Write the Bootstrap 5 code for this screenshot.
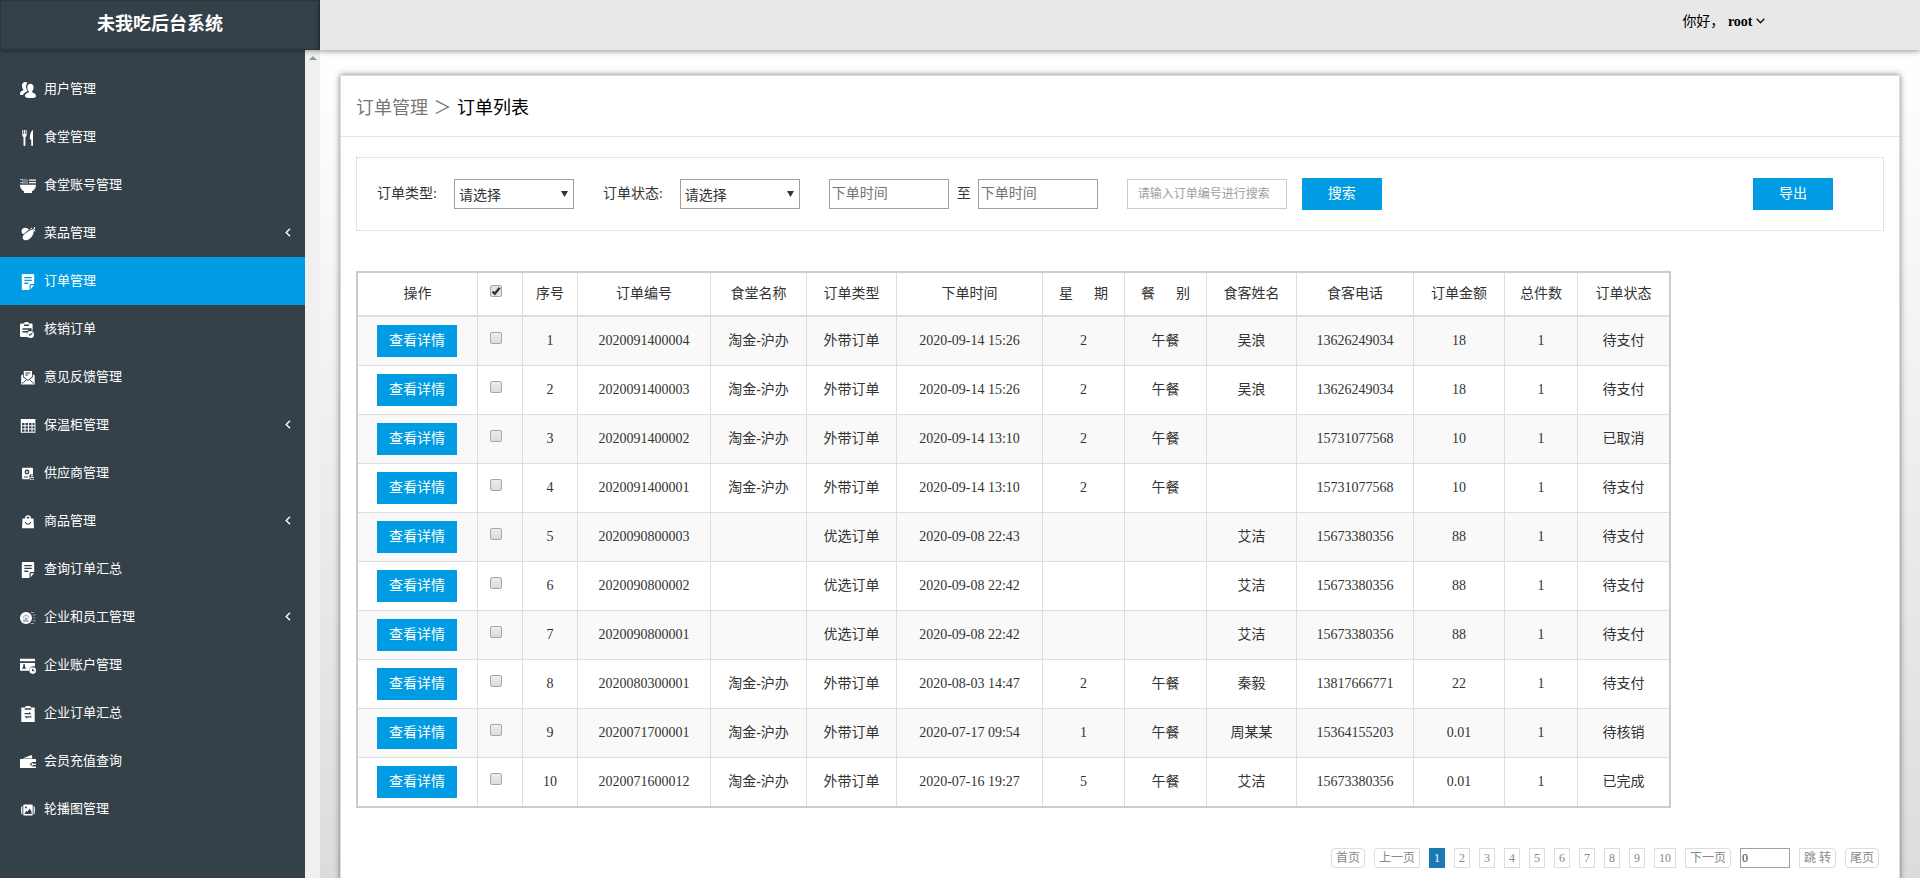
<!DOCTYPE html>
<html lang="zh-CN">
<head>
<meta charset="utf-8">
<meta name="viewport" content="width=device-width, initial-scale=1">
<title>未我吃后台系统</title>
<link href="https://cdn.jsdelivr.net/npm/bootstrap@5.3.0/dist/css/bootstrap.min.css" rel="stylesheet">
<style>
  :root { --brand: #009ce3; --dark: #354149; --rule: #ddd; }
  body { font: 14px/20px "Liberation Serif", "Noto Sans CJK SC", serif; color: #333; }
  button, input, select { font: inherit; }

  /* top bar */
  .topbar { height: 50px; z-index: 2; }
  .brand-box { width: 320px; background: var(--dark); color: #fff; font-size: 18px; line-height: 48px; font-weight: 700;
    box-shadow: inset 0 0 2px #111c24, 0 1px 5px rgba(0,0,0,.4); }
  .userbar { background: #e8e8e8; padding: 12px 155px 0 0; box-shadow: 0 1px 6px rgba(0,0,0,.45); }
  .userbar a { color: #000; }
  .userbar svg { vertical-align: 2px; }

  /* side menu */
  .sidebar { width: 305px; background: var(--dark); padding-top: 15px; }
  .sidebar .nav-link { height: 48px; padding: 0 14px 0 20px; color: #fff; font-size: 13px; line-height: 46px; gap: 8px; }
  .sidebar .nav-link.active { background: var(--brand); }
  .sidebar .ico { width: 16px; height: 16px; fill: #fff; flex: none; margin-top: 2px; }
  .sidebar .caret { width: 6px; height: 9px; fill: none; stroke: #fff; stroke-width: 1.4; margin: 0 0 2px auto; }
  .menu-scroll { width: 15px; background: #f0f0f0; padding-top: 6px; }
  .menu-scroll::before { content: ""; display: block; margin: 0 auto; width: 0; border: 4px solid transparent; border-top: 0; border-bottom-color: #999; }

  /* content */
  .workspace { background: linear-gradient(#fff, #dcdcdc); padding: 25px 20px 0; }
  .panel { background: #fff; border: 1px solid #ddd; box-shadow: 0 0 6px rgba(0,0,0,.5); min-height: 100vh; }
  .crumbs { font-size: 18px; line-height: 56px; padding: 4px 0 0 15px; border-bottom: 1px solid #e5e5e5; white-space: pre; color: #000; }
  .crumbs a, .crumbs span { color: #777; }
  .crumbs span { margin: 0 1px; }
  .panel-main { padding: 20px 15px 40px; }
  .filters { border: 1px dotted #ccc; padding: 20px 50px 20px 20px; line-height: 28px; }
  .filters label { line-height: 28px; }
  .field-gap { margin-left: 29px; }
  .between { margin: 0 7px 0 8px; }
  .search-btn { margin-left: 15px; }
  .box-field { width: 120px; height: 30px; border: 1px solid #a0a0a0; border-radius: 0; padding: 0 2px; background: #fff; color: #333; }
  .box-field::placeholder { color: #757575; }
  select.box-field { appearance: none; padding: 3px 4px 0; line-height: 24px; margin-left: 17px;
    background: #fff url("data:image/svg+xml,%3Csvg xmlns='http://www.w3.org/2000/svg' width='7' height='6'%3E%3Cpath d='M0 0h7L3.5 6z' fill='%23333'/%3E%3C/svg%3E") no-repeat right 5px top 11px; }
  .order-no { width: 160px; border-color: #ccc; font-size: 12px; padding: 0 10px; }
  .order-no::placeholder { color: #a0a0a0; }
  .act { width: 80px; height: 32px; border: 0; padding: 0; background: var(--brand); color: #fff; line-height: 30px; }

  .orders { table-layout: fixed; width: 1315px; margin: 40px 0; border: 2px solid #ccc; border-collapse: separate; border-spacing: 0; text-align: center; }
  .orders th, .orders td { font-weight: 400; padding: 0; border: solid var(--rule); border-width: 0 1px 1px 0; line-height: 20px; white-space: nowrap; }
  .orders tr > :last-child { border-right: 0; }
  .orders th { height: 44px; border-bottom-width: 2px; }
  .orders td { height: 49px; }
  .orders tbody tr:last-child td { border-bottom: 0; height: 48px; }
  .orders tbody tr:nth-child(odd) { background: #f9f9f9; }
  .orders td:first-child { text-align: left; padding-left: 19px; }
  .orders tr > :nth-child(2) { text-align: left; padding: 0 0 6px 12px; }
  .pick { appearance: none; display: block; width: 12px; height: 12px; margin: 0; border: 1px solid #a8a8a8; border-radius: 2px; background: linear-gradient(#ececec, #dcdcdc); }
  .pick:checked { background: url("data:image/svg+xml,%3Csvg xmlns='http://www.w3.org/2000/svg' viewBox='0 0 10 10'%3E%3Cpath d='M1.5 5.5l2.3 2.3L8.7 1.8' fill='none' stroke='%23333' stroke-width='2.4'/%3E%3C/svg%3E") center/10px, #e4e4e4; }

  /* pager */
  .pager { gap: 9px; padding-right: 5px; font-size: 12px; }
  .pager a, .pager button { display: block; height: 20px; padding: 0 4px; border: 1px solid var(--rule); background: #fff; color: #888; line-height: 18px; text-decoration: none; }
  .pager .on { background: #1b7ab5; border-color: #1b7ab5; color: #fff; }
  .pager .r-all { border-radius: 4px; }
  .pager .r-start { border-radius: 4px 0 0 4px; }
  .pager .r-end { border-radius: 0 4px 4px 0; }
  .pager input { width: 50px; height: 20px; border: 1px solid #a0a0a0; padding: 0 1px; color: #333; }
</style>
</head>
<body class="vh-100 overflow-hidden d-flex flex-column">

<header class="topbar d-flex flex-shrink-0 position-relative">
  <div class="brand-box text-center flex-shrink-0">未我吃后台系统</div>
  <div class="userbar flex-grow-1 d-flex justify-content-end align-items-start">
    <a href="#" class="text-decoration-none">你好， <b>root</b> <svg width="9" height="6" viewBox="0 0 9 6" fill="none" stroke="#111" stroke-width="1.3"><path d="M.7.8l3.8 3.9L8.3.8"/></svg></a>
  </div>
</header>

<div class="d-flex flex-grow-1 overflow-hidden">
  <nav class="sidebar flex-shrink-0" aria-label="主菜单">
    <div class="nav flex-column flex-nowrap">
      <a href="#" class="nav-link d-flex align-items-center"><svg class="ico" viewBox="0 0 16 16"><path d="M2 3.6C2 1.300 3.400 0 5.200 0c1 0 1.800.4 2.300 1C6.300 2 5.900 3.400 6 5c.1 1.500.6 2.700 1.400 3.600-.2 1-1.200 1.500-2.600 2.100-1 .5-1.500 1.300-1.700 2.300H.9C0 13 0 12.600 0 12c0-2 1-2.700 2.300-3.200 1-.4 1.200-.9.8-1.600C2.300 6.200 2 5 2 3.600z"/><path d="M7.200 5.300C7.200 3 8.700 1.800 10.400 1.800s3.200 1.200 3.200 3.500c0 1.600-.5 2.900-1.300 3.800-.5.7-.2 1.200.7 1.600 1.700.7 3 1.300 3 3.300 0 1.600-1.500 2-5.500 2s-5.500-.4-5.500-2c0-2 1.300-2.600 3-3.300.9-.4 1.200-.9.6-1.600-.9-1-1.400-2.200-1.400-3.800z"/></svg>用户管理</a>
      <a href="#" class="nav-link d-flex align-items-center"><svg class="ico" viewBox="0 0 16 16"><path d="M2.300 0h.9v4h.7V0h1v4h.7V0h1v5c0 1-.5 1.700-1.200 2v8.200c0 1-1.900 1-1.900 0V7c-.8-.3-1.200-1-1.200-2zM13 0v15.200c0 1-1.800 1-1.800 0V9.500H9.900C9.600 4.500 10.800 1 13 0z"/></svg>食堂管理</a>
      <a href="#" class="nav-link d-flex align-items-center"><svg class="ico" viewBox="0 0 16 16"><path d="M0 6.700h16c0 3-1.600 5.400-4 6.600V15H4v-1.700C1.600 12.100 0 9.700 0 6.700z"/><path d="M9 1.500h7v1.200H9zM9 4h7v1.200H9z"/><path d="M0 1.500h3M0 4.600h3M3 6V1.200M5 6V.7M7 6V1.200" stroke="#fff" stroke-opacity=".65"/></svg>食堂账号管理</a>
      <a href="#" class="nav-link d-flex align-items-center"><svg class="ico" viewBox="0 0 16 16"><path d="M1.800 6.800C1 4.500 2.200 2.400 4.200 1.800c1.800-.3 3.500.6 4.800 1.700L3.300 8.200C2.600 7.900 2 7.500 1.800 6.800z"/><path d="M2.800 10.200C4 7.700 7.500 6 10 4.300c1.700-1 3.600 0 3.500 2.200-.2 3-3.200 7-7 7.800-2.700.4-4.500-1.800-3.700-4.100z"/><path d="M12 4.800l2.600-2.600M10.500 3.500l1.200-1.300M13 5.300c1 0 1.500-.5 2-1.300M14.500 1v1.500" fill="none" stroke="#fff" stroke-width="1.100"/></svg>菜品管理<svg class="caret" viewBox="0 0 6 9"><path d="M5 .7L1.200 4.500 5 8.300"/></svg></a>
      <a href="#" class="nav-link d-flex align-items-center active" aria-current="page"><svg class="ico" viewBox="0 0 16 16"><path fill-rule="evenodd" d="M3 0h10c.8 0 1.200.4 1.200 1.200V10H11c-1 0-1.500.5-1.500 1.500V16H3c-.8 0-1.200-.4-1.200-1.200V1.200C1.800.4 2.200 0 3 0zm1.300 3v1.300h7.500V3zm0 2.800v1.300h7.500V5.800zm0 2.800v1.300h4V8.600zM10.700 11.200H14l-3.300 4z"/></svg>订单管理</a>
      <a href="#" class="nav-link d-flex align-items-center"><svg class="ico" viewBox="0 0 16 16"><path fill-rule="evenodd" d="M1.800 1.500H4C4 .5 5 0 6.500 0S9 .5 9 1.500h2.300c.8 0 1.300.5 1.300 1.300v5.700l-1 .1V6.300H2.500v1.400h6.300L7.500 9h-5v1.400h4.300c-.3 1.700.2 3.200 1.500 4.600H1.800C.8 15 0 14.500 0 13.500V2.800c0-.8.8-1.300 1.800-1.300zM4 2.500V4h5V2.500z"/><path fill-rule="evenodd" d="M10.500 9a3.500 3.500 0 110 7 3.500 3.500 0 010-7zm-2 3.400L10 14l2.800-2.800-.7-.8L10 12.500l-.8-.8z"/></svg>核销订单</a>
      <a href="#" class="nav-link d-flex align-items-center"><svg class="ico" viewBox="0 0 16 16"><path d="M1.200 5.500L3 4.300v2.900L7.800 11l5-3.800V4.300l1.900 1.200v9H1.200z"/><path fill-rule="evenodd" d="M3.800 1h8.200v5.800L7.800 9.900 3.800 6.700zm1.400 1.600v1h5v-1zm0 2v1h3v-1z"/><path d="M2 13.600l4.200-3.500M13.900 13.600L9.500 9.800" stroke="#354149" stroke-width=".9"/></svg>意见反馈管理</a>
      <a href="#" class="nav-link d-flex align-items-center"><svg class="ico" viewBox="0 0 16 16"><path fill-rule="evenodd" d="M.8 1h14.600v13.800H.8zM2 5v2.300h2.500V5zm3.500 0v2.300H8V5zM9 5v2.300h2.500V5zm3.500 0v2.300h2V5zM2 8.300v2.300h2.500V8.300zm3.500 0v2.300H8V8.300zm3.500 0v2.300h2.500V8.300zm3.500 0v2.300h2V8.300zM2 11.600v2.200h2.500v-2.200zm3.500 0v2.200H8v-2.200zm3.500 0v2.200h2.500v-2.200zm3.500 0v2.200h2v-2.200z"/></svg>保温柜管理<svg class="caret" viewBox="0 0 6 9"><path d="M5 .7L1.200 4.500 5 8.300"/></svg></a>
      <a href="#" class="nav-link d-flex align-items-center"><svg class="ico" viewBox="0 0 16 16"><path fill-rule="evenodd" d="M3.200 1.800h8.600c.8 0 1.200.4 1.200 1.200v5.500H9.500v4.700H3.200c-.8 0-1.200-.4-1.200-1.200V3c0-.8.4-1.200 1.200-1.200zM7 3.600a2.400 2.400 0 100 4.800 2.400 2.400 0 000-4.800zm0 1.400a1 1 0 110 2 1 1 0 010-2zM4 10.500v1h4v-1z"/><path d="M11 9h2v1.500h-2zM10 11h4v1h-4zM10 12.700h1.500V14H10zM12.500 12.700H14V14h-1.500z" opacity=".8"/></svg>供应商管理</a>
      <a href="#" class="nav-link d-flex align-items-center"><svg class="ico" viewBox="0 0 16 16"><path fill-rule="evenodd" d="M2.500 4.500H5C5 2.500 6.200 1.300 8 1.300s3 1.200 3 3.200h2.500L14 14.200H2zm4 0h3C9.500 3.300 9 2.700 8 2.700s-1.500.6-1.500 1.800zM5 8c.3 1.800 1.300 2.800 3 2.800S10.700 9.800 11 8h-1c-.3 1.200-.9 1.700-2 1.700S6.300 9.200 6 8z"/></svg>商品管理<svg class="caret" viewBox="0 0 6 9"><path d="M5 .7L1.200 4.500 5 8.300"/></svg></a>
      <a href="#" class="nav-link d-flex align-items-center"><svg class="ico" viewBox="0 0 16 16"><path fill-rule="evenodd" d="M3 0h10c.8 0 1.200.4 1.200 1.200V10H11c-1 0-1.500.5-1.500 1.500V16H3c-.8 0-1.200-.4-1.200-1.200V1.200C1.800.4 2.200 0 3 0zm1.300 3v1.300h7.500V3zm0 2.800v1.300h7.500V5.800zm0 2.800v1.300h4V8.600zM10.700 11.200H14l-3.300 4z"/></svg>查询订单汇总</a>
      <a href="#" class="nav-link d-flex align-items-center"><svg class="ico" viewBox="0 0 16 16"><circle cx="6" cy="8" r="6"/><path d="M2.700 7.500L6 4.700l3.300 2.800M6 7v4M4 8.500V11M3 11.200h6M6 9h2" fill="none" stroke="#354149" stroke-opacity=".65" stroke-width=".9"/><path d="M10.800 2.500h3.200M12.800 5h3M13.300 8H15M12.800 10.800h3M10.800 13.500h3.200" stroke="#fff" stroke-opacity=".5"/></svg>企业和员工管理<svg class="caret" viewBox="0 0 6 9"><path d="M5 .7L1.200 4.500 5 8.300"/></svg></a>
      <a href="#" class="nav-link d-flex align-items-center"><svg class="ico" viewBox="0 0 16 16"><path fill-rule="evenodd" d="M0 .8h15v2.400H0zM0 5h15v3.600c-3-1-5.800.7-6 4.200H0zm3.200 1.300v2.400L2 10.800h4.200L5 8.700V6.300z"/><path fill-rule="evenodd" d="M12.700 9.300a3.300 3.300 0 110 6.600 3.300 3.300 0 010-6.600zm-.6 1.400v2.600h2.200v-1h-1.100v-1.600z"/></svg>企业账户管理</a>
      <a href="#" class="nav-link d-flex align-items-center"><svg class="ico" viewBox="0 0 16 16"><path fill-rule="evenodd" d="M1.300 1.500H5C5 .5 6.300 0 8 0s3 .5 3 1.500h3.700V16H1.300zm3.500.8v1.400h6.400V2.300zM4.500 7v1.200h7L9 5.800v1.200zm0 3.200L7.200 13v-1.500h4.300v-1.300z"/></svg>企业订单汇总</a>
      <a href="#" class="nav-link d-flex align-items-center"><svg class="ico" viewBox="0 0 16 16"><path d="M2.500 4.500l9-3.500 1 3.500z"/><path fill-rule="evenodd" d="M0 5h16v3h-3.500l-3 2.200 3 2.300H16V14H0zm11 5.200l2-1.500v1h3v1.200h-3v1z"/></svg>会员充值查询</a>
      <a href="#" class="nav-link d-flex align-items-center"><svg class="ico" viewBox="0 0 16 16"><path fill-rule="evenodd" d="M4.300 2.500h7.400c.6 0 1 .4 1 1v9c0 .6-.4 1-1 1H4.300c-.6 0-1-.4-1-1v-9c0-.6.4-1 1-1zM6 4.500a1 1 0 100 2 1 1 0 000-2zM4.500 12h7V9.500L9.600 6.500l-2 3.200-1.300-1z"/><path d="M2.500 4v8.500C1 12 1 11.500 1 8.200S1 4.500 2.500 4zM13.500 4v8.500c1.500-.5 1.500-1 1.500-4.300s0-3.700-1.500-4.200z" opacity=".85"/></svg>轮播图管理</a>
    </div>
  </nav>
  <div class="menu-scroll flex-shrink-0"></div>

  <main class="workspace flex-grow-1">
    <section class="panel">
      <div class="crumbs"><a href="#" class="text-decoration-none">订单管理</a> <span>＞</span> 订单列表</div>
      <div class="panel-main">
        <form class="filters d-flex align-items-center">
          <label for="kind">订单类型:</label>
          <select id="kind" class="box-field"><option>请选择</option></select>
          <label for="state" class="field-gap">订单状态:</label>
          <select id="state" class="box-field"><option>请选择</option></select>
          <input type="text" class="box-field field-gap" placeholder="下单时间" aria-label="开始时间">
          <span class="between">至</span>
          <input type="text" class="box-field" placeholder="下单时间" aria-label="结束时间">
          <input type="text" class="box-field order-no field-gap" placeholder="请输入订单编号进行搜索" aria-label="订单编号">
          <button type="button" class="act search-btn">搜索</button>
          <button type="button" class="act ms-auto">导出</button>
        </form>

        <table class="orders">
          <colgroup>
            <col style="width:120px"><col style="width:45px"><col style="width:55px"><col style="width:133px"><col style="width:96px"><col style="width:90px"><col style="width:146px"><col style="width:82px"><col style="width:82px"><col style="width:90px"><col style="width:117px"><col style="width:91px"><col style="width:73px"><col style="width:91px">
          </colgroup>
          <thead>
            <tr><th>操作</th><th><input type="checkbox" class="pick" checked aria-label="全选"></th><th>序号</th><th>订单编号</th><th>食堂名称</th><th>订单类型</th><th>下单时间</th><th>星&nbsp;&nbsp;&nbsp;&nbsp;&nbsp;&nbsp;期</th><th>餐&nbsp;&nbsp;&nbsp;&nbsp;&nbsp;&nbsp;别</th><th>食客姓名</th><th>食客电话</th><th>订单金额</th><th>总件数</th><th>订单状态</th></tr>
          </thead>
          <tbody>
            <tr><td><button type="button" class="act">查看详情</button></td><td><input type="checkbox" class="pick" aria-label="选择 1"></td><td>1</td><td>2020091400004</td><td>淘金-沪办</td><td>外带订单</td><td>2020-09-14 15:26</td><td>2</td><td>午餐</td><td>吴浪</td><td>13626249034</td><td>18</td><td>1</td><td>待支付</td></tr>
            <tr><td><button type="button" class="act">查看详情</button></td><td><input type="checkbox" class="pick" aria-label="选择 2"></td><td>2</td><td>2020091400003</td><td>淘金-沪办</td><td>外带订单</td><td>2020-09-14 15:26</td><td>2</td><td>午餐</td><td>吴浪</td><td>13626249034</td><td>18</td><td>1</td><td>待支付</td></tr>
            <tr><td><button type="button" class="act">查看详情</button></td><td><input type="checkbox" class="pick" aria-label="选择 3"></td><td>3</td><td>2020091400002</td><td>淘金-沪办</td><td>外带订单</td><td>2020-09-14 13:10</td><td>2</td><td>午餐</td><td></td><td>15731077568</td><td>10</td><td>1</td><td>已取消</td></tr>
            <tr><td><button type="button" class="act">查看详情</button></td><td><input type="checkbox" class="pick" aria-label="选择 4"></td><td>4</td><td>2020091400001</td><td>淘金-沪办</td><td>外带订单</td><td>2020-09-14 13:10</td><td>2</td><td>午餐</td><td></td><td>15731077568</td><td>10</td><td>1</td><td>待支付</td></tr>
            <tr><td><button type="button" class="act">查看详情</button></td><td><input type="checkbox" class="pick" aria-label="选择 5"></td><td>5</td><td>2020090800003</td><td></td><td>优选订单</td><td>2020-09-08 22:43</td><td></td><td></td><td>艾洁</td><td>15673380356</td><td>88</td><td>1</td><td>待支付</td></tr>
            <tr><td><button type="button" class="act">查看详情</button></td><td><input type="checkbox" class="pick" aria-label="选择 6"></td><td>6</td><td>2020090800002</td><td></td><td>优选订单</td><td>2020-09-08 22:42</td><td></td><td></td><td>艾洁</td><td>15673380356</td><td>88</td><td>1</td><td>待支付</td></tr>
            <tr><td><button type="button" class="act">查看详情</button></td><td><input type="checkbox" class="pick" aria-label="选择 7"></td><td>7</td><td>2020090800001</td><td></td><td>优选订单</td><td>2020-09-08 22:42</td><td></td><td></td><td>艾洁</td><td>15673380356</td><td>88</td><td>1</td><td>待支付</td></tr>
            <tr><td><button type="button" class="act">查看详情</button></td><td><input type="checkbox" class="pick" aria-label="选择 8"></td><td>8</td><td>2020080300001</td><td>淘金-沪办</td><td>外带订单</td><td>2020-08-03 14:47</td><td>2</td><td>午餐</td><td>秦毅</td><td>13817666771</td><td>22</td><td>1</td><td>待支付</td></tr>
            <tr><td><button type="button" class="act">查看详情</button></td><td><input type="checkbox" class="pick" aria-label="选择 9"></td><td>9</td><td>2020071700001</td><td>淘金-沪办</td><td>外带订单</td><td>2020-07-17 09:54</td><td>1</td><td>午餐</td><td>周某某</td><td>15364155203</td><td>0.01</td><td>1</td><td>待核销</td></tr>
            <tr><td><button type="button" class="act">查看详情</button></td><td><input type="checkbox" class="pick" aria-label="选择 10"></td><td>10</td><td>2020071600012</td><td>淘金-沪办</td><td>外带订单</td><td>2020-07-16 19:27</td><td>5</td><td>午餐</td><td>艾洁</td><td>15673380356</td><td>0.01</td><td>1</td><td>已完成</td></tr>
          </tbody>
        </table>

        <nav class="pager d-flex justify-content-end" aria-label="分页">
          <a href="#" class="r-all me-px">首页</a>
          <a href="#" class="r-start">上一页</a>
          <a href="#" class="on">1</a>
          <a href="#">2</a>
          <a href="#">3</a>
          <a href="#">4</a>
          <a href="#">5</a>
          <a href="#">6</a>
          <a href="#">7</a>
          <a href="#">8</a>
          <a href="#">9</a>
          <a href="#">10</a>
          <a href="#" class="r-end">下一页</a>
          <input type="text" value="0" aria-label="页码">
          <button type="button" class="r-end">跳 转</button>
          <a href="#" class="r-all">尾页</a>
        </nav>
      </div>
    </section>
  </main>
</div>
<script src="https://cdn.jsdelivr.net/npm/bootstrap@5.3.0/dist/js/bootstrap.bundle.min.js"></script>
</body>
</html>
